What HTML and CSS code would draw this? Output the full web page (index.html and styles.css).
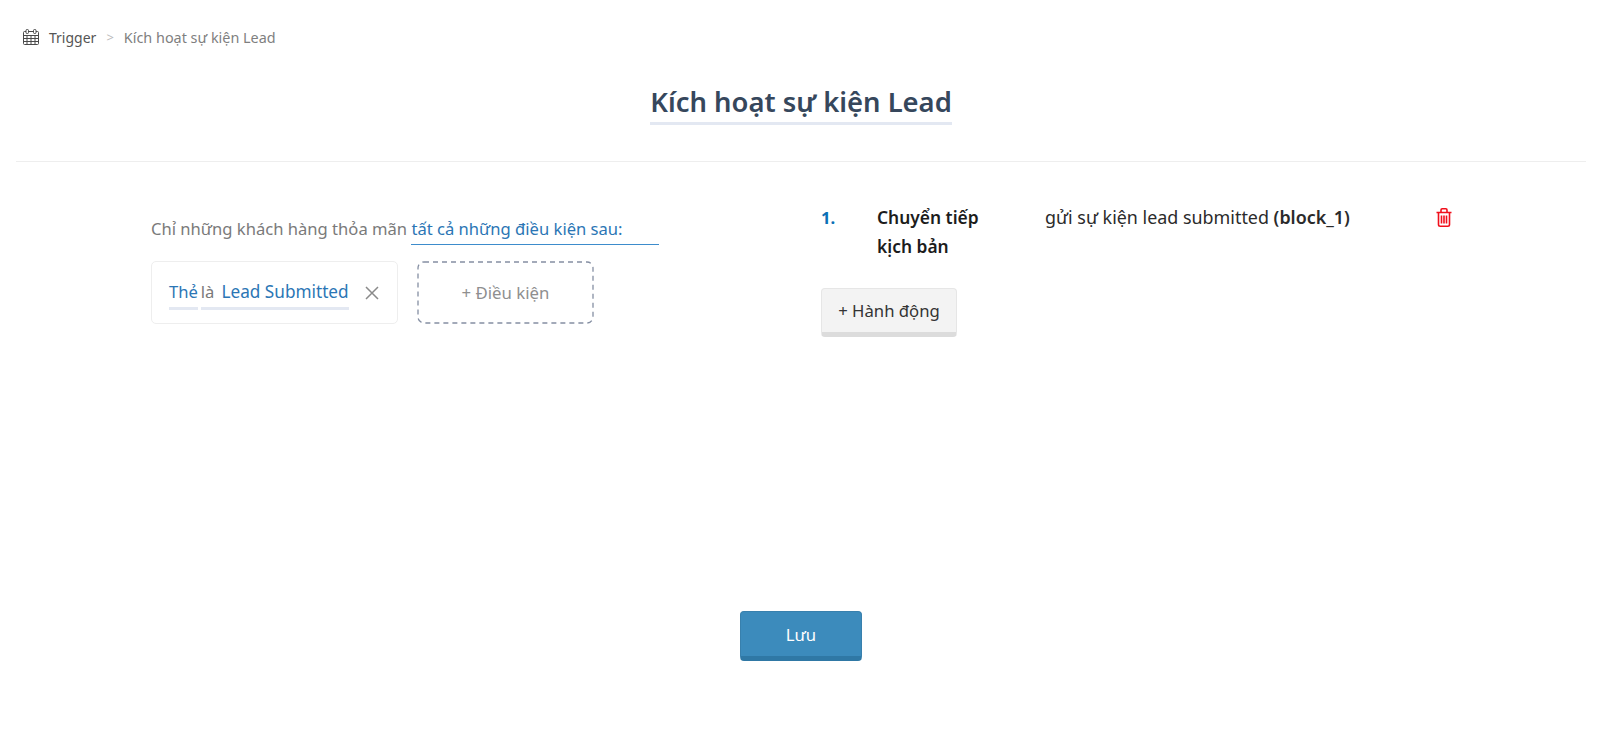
FILE: index.html
```html
<!DOCTYPE html>
<html lang="vi">
<head>
<meta charset="UTF-8" />
<title>Kích hoạt sự kiện Lead</title>
<link rel="stylesheet" href="styles.css">
</head>
<body>

<nav class="breadcrumb">
  <svg class="cal-icon" viewBox="0 0 16 16" width="16" height="16" fill="none" stroke="#4a4a4a">
    <rect x="0.5" y="2.5" width="15" height="13" rx="1"/>
    <path d="M0.5 6.5h15M0.5 9.5h15M0.5 12.5h15M4 6.5v9M8 6.5v9M12 6.5v9"/>
    <rect x="3" y="0.5" width="2.5" height="4" rx="1" fill="#fff"/>
    <rect x="10.5" y="0.5" width="2.5" height="4" rx="1" fill="#fff"/>
  </svg>
  <span class="crumb-root">Trigger</span>
  <span class="crumb-sep">&gt;</span>
  <span class="crumb-current">Kích hoạt sự kiện Lead</span>
</nav>

<header class="page-head">
  <h1>Kích hoạt sự kiện Lead</h1>
</header>

<main class="editor">
  <section class="conditions">
    <p class="cond-intro">Chỉ những khách hàng thỏa mãn <span class="cond-mode">tất cả những điều kiện sau:</span></p>
    <div class="cond-row">
      <div class="cond-card">
        <span class="pick">Thẻ</span>
        <span class="pick"><span class="cond-is">là</span><span class="pick-value">Lead Submitted</span></span>
        <svg class="close-icon" viewBox="0 0 14 14" width="14" height="14" stroke="#8a8a8a" stroke-width="1.5">
          <path d="M1 1l12 12M13 1L1 13"/>
        </svg>
      </div>
      <button class="add-cond">
        <svg class="dash-frame" viewBox="0 0 177 63" width="177" height="63" fill="none" stroke="#858fa3" stroke-width="1.3" stroke-dasharray="5 4">
          <rect x="1" y="1" width="175" height="61" rx="6"/>
        </svg>
        + Điều kiện
      </button>
    </div>
  </section>

  <section class="actions">
    <div class="action-row">
      <span class="action-no">1.</span>
      <strong class="action-name">Chuyển tiếp kịch bản</strong>
      <span class="action-desc">gửi sự kiện lead submitted <b>(block_1)</b></span>
      <svg class="trash-icon" viewBox="0 0 16 19" width="16" height="19" fill="none" stroke="#f0101c" stroke-width="1.6">
        <path d="M0.5 4.5h15M2.5 4.5v12a1.7 1.7 0 0 0 1.7 1.7h7.6a1.7 1.7 0 0 0 1.7-1.7v-12"/>
        <path d="M5 4.5V2a1.2 1.2 0 0 1 1.2-1.2h3.6A1.2 1.2 0 0 1 11 2v2.5"/>
        <path d="M5.5 7.5v8M8 7.5v8M10.5 7.5v8"/>
      </svg>
    </div>
    <button class="add-action">+ Hành động</button>
  </section>
</main>

<div class="save-bar">
  <button class="btn-save">Lưu</button>
</div>

</body>
</html>
```

FILE: styles.css
```css
body {
  margin: 0;
  background: #fff;
  font-family: "Noto Sans", Arial, sans-serif;
  font-size: 16.6px;
  color: #2b2b2b;
}
button {
  font-family: inherit;
  cursor: pointer;
}

/* Breadcrumb */
.breadcrumb {
  display: flex;
  align-items: center;
  height: 20px;
  padding: 27px 0 0 23px;
  font-size: 14px;
}
.cal-icon {
  margin-right: 10px;
}
.crumb-root {
  color: #555;
}
.crumb-sep {
  margin: 0 10px;
  color: #bbb;
  font-size: 13px;
}
.crumb-current {
  color: #7f7f7f;
  font-size: 14.4px;
}

/* Title */
.page-head {
  margin: 0 14px 0 16px;
  height: 114px;
  border-bottom: 1px solid #eee;
  text-align: center;
}
.page-head h1 {
  display: inline-block;
  margin: 34px 0 0;
  font-size: 27.4px;
  font-weight: 600;
  line-height: 41px;
  color: #36475c;
  border-bottom: 3px solid #e3e8f2;
}

.editor {
  display: flex;
  padding-top: 41px;
  height: 449px;
  box-sizing: border-box;
}

/* Conditions */
.conditions {
  width: 670px;
  margin-left: 151px;
  padding-top: 14px;
}
.cond-intro {
  margin: 0;
  line-height: 24px;
  color: #7a7a7a;
}
.cond-mode {
  display: inline-block;
  width: 248px;
  padding-bottom: 3px;
  color: #2b76b5;
  border-bottom: 1px solid #3d8ccc;
}
.cond-row {
  display: flex;
  gap: 19px;
  margin-top: 16px;
}
.cond-card {
  display: flex;
  align-items: center;
  gap: 3px;
  width: 247px;
  height: 63px;
  box-sizing: border-box;
  padding: 0 18px 0 17px;
  border: 1px solid #eee;
  border-radius: 5px;
}
.pick {
  color: #2b76b5;
  line-height: 31px;
  border-bottom: 3px solid #e3e8f2;
}
.pick-value {
  font-size: 17.2px;
}
.cond-is {
  color: #7a7a7a;
  margin-right: 7px;
}
.close-icon {
  margin-left: auto;
}
.add-cond {
  position: relative;
  width: 177px;
  height: 63px;
  background: #fff;
  border: none;
  color: #8f8f8f;
  font-size: 16.8px;
}
.dash-frame {
  position: absolute;
  top: 0;
  left: 0;
}

/* Actions */
.action-row {
  display: flex;
  align-items: flex-start;
  width: 632px;
  line-height: 29px;
}
.action-no {
  width: 56px;
  color: #0b70b5;
  font-weight: 700;
}
.action-name {
  width: 168px;
  padding-right: 50px;
  box-sizing: border-box;
  font-size: 17.4px;
  font-weight: 600;
  color: #1c1c1c;
}
.action-desc {
  flex: 1;
  font-size: 17.9px;
  color: #2b2b2b;
}
.action-desc b {
  font-weight: 600;
}
.trash-icon {
  margin: 5px 1px 0 0;
}
.add-action {
  display: block;
  width: 136px;
  height: 49px;
  margin-top: 27px;
  background: #f3f3f3;
  border: 1px solid #e6e6e6;
  border-bottom: 5px solid #dcdcdc;
  border-radius: 4px;
  color: #333;
  font-size: 16.7px;
}

/* Save */
.save-bar {
  padding-left: 2px;
  text-align: center;
}
.btn-save {
  width: 122px;
  height: 50px;
  background: #3c8bbc;
  border: 1px solid #3880ad;
  border-bottom: 5px solid #2f78a5;
  border-radius: 4px;
  color: #fff;
  font-size: 16.7px;
}
```
